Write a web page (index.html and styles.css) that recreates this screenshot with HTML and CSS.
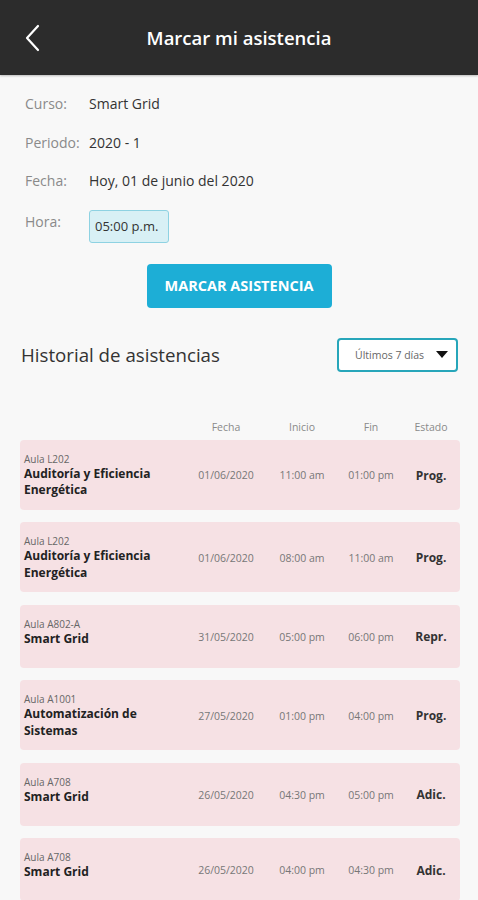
FILE: index.html
```html
<!DOCTYPE html>
<html lang="es">
<head>
  <meta charset="UTF-8">
  <title>Marcar mi asistencia</title>
  <meta name="viewport" content="width=device-width, initial-scale=1">
  <link rel="stylesheet" href="styles.css">
</head>
<body>

  <header class="topbar">
    <svg class="back" width="16" height="28" viewBox="0 0 16 28">
      <polyline points="14,2 3,14 14,26" fill="none" stroke="#fff" stroke-width="2.2" stroke-linecap="round" stroke-linejoin="round"/>
    </svg>
    <h1>Marcar mi asistencia</h1>
  </header>

  <section class="info">
    <span class="label">Curso:</span><span class="value">Smart Grid</span>
    <span class="label">Periodo:</span><span class="value">2020 - 1</span>
    <span class="label">Fecha:</span><span class="value">Hoy, 01 de junio del 2020</span>
    <span class="label label-hora">Hora:</span><span class="value"><span class="time-box">05:00 p.m.</span></span>
  </section>

  <div class="action">
    <button class="btn-mark">MARCAR ASISTENCIA</button>
  </div>

  <div class="history-head">
    <h2>Historial de asistencias</h2>
    <div class="dropdown">
      <span>Últimos 7 días</span>
      <span class="caret"></span>
    </div>
  </div>

  <div class="table">
    <div class="thead">
      <span></span>
      <span>Fecha</span>
      <span>Inicio</span>
      <span>Fin</span>
      <span>Estado</span>
    </div>

    <div class="row">
      <div class="course"><span class="room">Aula L202</span><strong>Auditoría y Eficiencia Energética</strong></div>
      <span class="cell">01/06/2020</span>
      <span class="cell">11:00 am</span>
      <span class="cell">01:00 pm</span>
      <span class="state">Prog.</span>
    </div>

    <div class="row">
      <div class="course"><span class="room">Aula L202</span><strong>Auditoría y Eficiencia Energética</strong></div>
      <span class="cell">01/06/2020</span>
      <span class="cell">08:00 am</span>
      <span class="cell">11:00 am</span>
      <span class="state">Prog.</span>
    </div>

    <div class="row">
      <div class="course"><span class="room">Aula A802-A</span><strong>Smart Grid</strong></div>
      <span class="cell">31/05/2020</span>
      <span class="cell">05:00 pm</span>
      <span class="cell">06:00 pm</span>
      <span class="state">Repr.</span>
    </div>

    <div class="row">
      <div class="course"><span class="room">Aula A1001</span><strong>Automatización de Sistemas</strong></div>
      <span class="cell">27/05/2020</span>
      <span class="cell">01:00 pm</span>
      <span class="cell">04:00 pm</span>
      <span class="state">Prog.</span>
    </div>

    <div class="row">
      <div class="course"><span class="room">Aula A708</span><strong>Smart Grid</strong></div>
      <span class="cell">26/05/2020</span>
      <span class="cell">04:30 pm</span>
      <span class="cell">05:00 pm</span>
      <span class="state">Adic.</span>
    </div>

    <div class="row">
      <div class="course"><span class="room">Aula A708</span><strong>Smart Grid</strong></div>
      <span class="cell">26/05/2020</span>
      <span class="cell">04:00 pm</span>
      <span class="cell">04:30 pm</span>
      <span class="state">Adic.</span>
    </div>
  </div>

</body>
</html>
```

FILE: styles.css
```css
body {
  font-family: "Open Sans", "Noto Sans", sans-serif;
  background: #f8f8f8;
  color: #333;
  margin: 0;
}

.topbar {
  height: 75px;
  background: #2c2c2c;
  display: flex;
  align-items: center;
  justify-content: center;
  position: relative;
  box-shadow: 0 1px 2px rgba(0, 0, 0, 0.25);
}

.topbar .back {
  position: absolute;
  left: 24px;
  top: 24px;
}

.topbar h1 {
  margin: 0;
  color: #fff;
  font-size: 18.5px;
  font-weight: 600;
}

.info {
  display: grid;
  grid-template-columns: 64px auto;
  row-gap: 18.5px;
  padding: 19px 0 0 25px;
  font-size: 14px;
  line-height: 20px;
}

.info .label {
  color: #8a8a8a;
}

.info .label-hora {
  margin-top: 2px;
}

.info .value {
  color: #333;
}

.time-box {
  display: inline-block;
  box-sizing: border-box;
  width: 80px;
  height: 33px;
  line-height: 31px;
  padding-left: 5px;
  font-size: 13px;
  background: #d8f0f5;
  border: 1px solid #8ed2e2;
  border-radius: 3px;
}

.action {
  display: flex;
  justify-content: center;
  padding-top: 21px;
}

.btn-mark {
  width: 185px;
  height: 44px;
  border: none;
  border-radius: 4px;
  background: #1daed6;
  color: #fff;
  font-family: inherit;
  font-size: 14.5px;
  font-weight: 700;
}

.history-head {
  display: flex;
  align-items: center;
  justify-content: space-between;
  padding: 30px 20px 0 21px;
}

.history-head h2 {
  margin: 0;
  font-size: 18.7px;
  font-weight: 400;
  color: #333;
}

.dropdown {
  box-sizing: border-box;
  width: 121px;
  height: 34px;
  border: 2px solid #27a6ba;
  border-radius: 4px;
  background: #fff;
  display: flex;
  align-items: center;
  justify-content: space-between;
  padding: 0 8px 0 16px;
  font-size: 10.5px;
  color: #666;
}

.caret {
  width: 0;
  height: 0;
  border-left: 6px solid transparent;
  border-right: 6px solid transparent;
  border-top: 7px solid #111;
}

.table {
  padding: 45px 18px 0 20px;
}

.thead, .row {
  display: grid;
  grid-template-columns: 1fr 76px 76px 62px 58px;
  align-items: center;
  text-align: center;
}

.thead {
  font-size: 10.5px;
  color: #8a8a8a;
  height: 20px;
  margin-bottom: 3px;
}

.row {
  box-sizing: border-box;
  min-height: 63px;
  margin-bottom: 12.5px;
  padding: 12px 0 11px 4px;
  background: #f6e1e4;
  border-radius: 4px;
}

.course {
  align-self: start;
  display: flex;
  flex-direction: column;
  text-align: left;
  padding-right: 20px;
}

.room {
  font-size: 10px;
  line-height: 14px;
  color: #666;
}

.course strong {
  font-size: 12px;
  line-height: 16.5px;
  font-weight: 700;
  color: #222;
}

.cell {
  font-size: 10.5px;
  color: #777;
}

.state {
  font-size: 12px;
  font-weight: 700;
  color: #333;
}
```
